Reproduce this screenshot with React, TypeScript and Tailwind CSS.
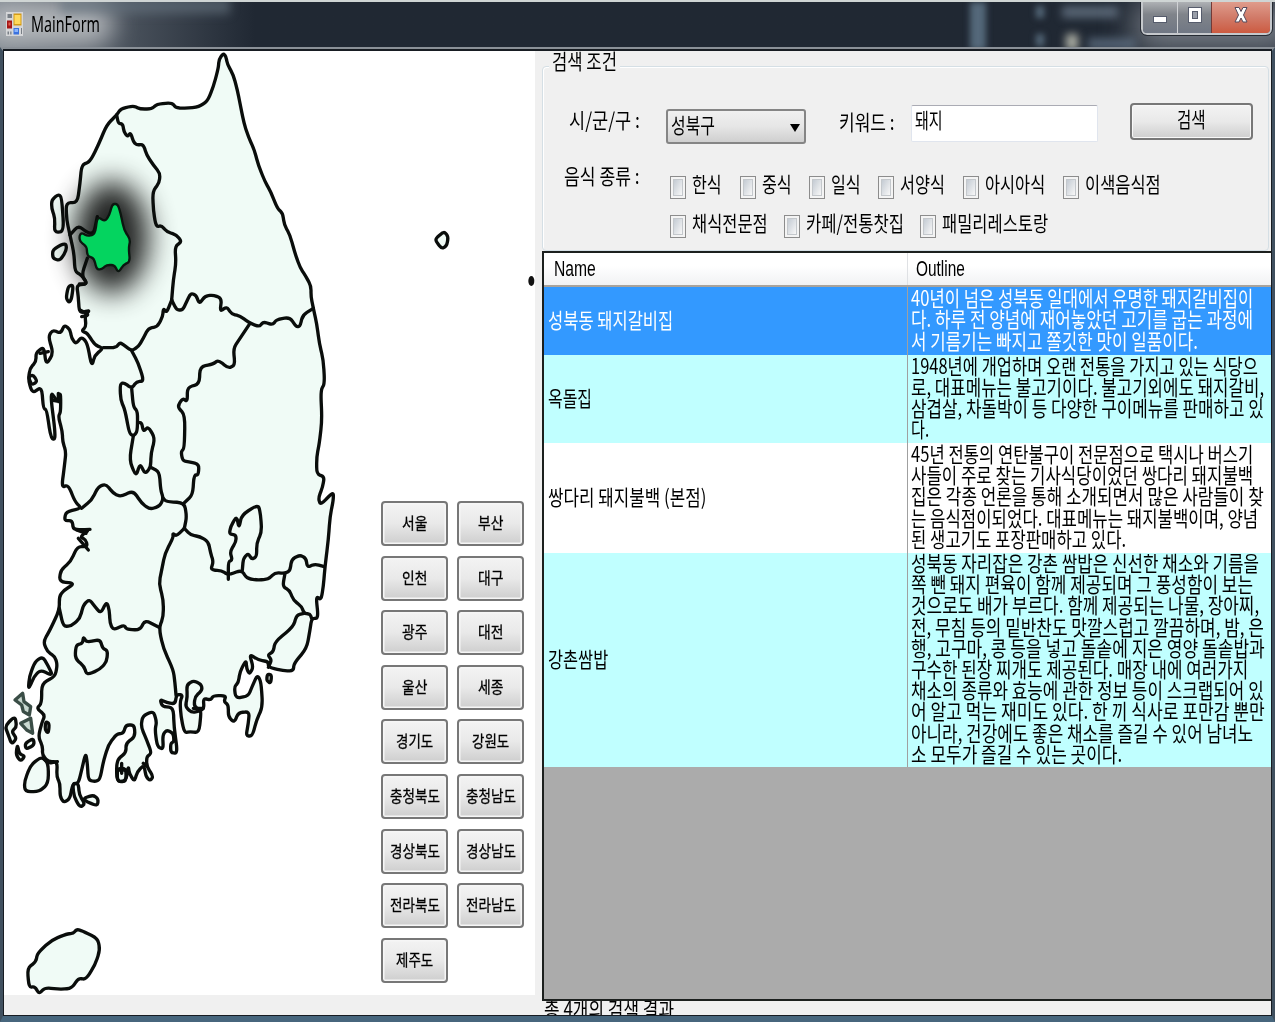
import { useLayoutEffect, useRef, useState } from 'react';

type FitProps = { text: string; w: number; size?: string; className?: string };

// One line of text condensed or widened horizontally to an exact width.
function Fit({ text, w, size = 'text-[21px] leading-[21.2px]', className = '' }: FitProps) {
  const ref = useRef<HTMLSpanElement>(null);
  const [scale, setScale] = useState(1);
  useLayoutEffect(() => {
    if (ref.current) setScale(w / ref.current.offsetWidth);
  }, [text, w]);
  return (
    <span className={`block shrink-0 whitespace-nowrap ${size} ${className}`} style={{ width: w }}>
      <span ref={ref} className="inline-block origin-left" style={{ transform: `scaleX(${scale})` }}>
        {text}
      </span>
    </span>
  );
}

// Rounds the corners of a path made of M/L/Z commands.
function soften(d: string) {
  return d
    .split('M')
    .filter(Boolean)
    .map((part) => {
      const closed = part.endsWith('Z');
      const p = part
        .replace('Z', '')
        .split('L')
        .map((s) => s.trim().split(/\s+/).map(Number));
      if (p.length < 3 || p.some((q) => q.length !== 2)) return 'M' + part;
      const mix = (a: number[], b: number[], t: number) => `${a[0] + (b[0] - a[0]) * t} ${a[1] + (b[1] - a[1]) * t}`;
      const n = p.length;
      let out = closed ? `M${mix(p[0], p[1], 0.4)}` : `M${p[0].join(' ')}`;
      const end = closed ? n : n - 2;
      for (let i = 1; i <= end; i++) {
        const a = p[(i - 1) % n];
        const b = p[i % n];
        const c = p[(i + 1) % n];
        out += `L${mix(b, a, 0.4)}Q${b.join(' ')} ${mix(b, c, 0.4)}`;
      }
      return out + (closed ? 'Z' : `L${p[n - 1].join(' ')}`);
    })
    .join('');
}

const regionRows = [
  ['서울', '부산'],
  ['인천', '대구'],
  ['광주', '대전'],
  ['울산', '세종'],
  ['경기도', '강원도'],
  ['충청북도', '충청남도'],
  ['경상북도', '경상남도'],
  ['전라북도', '전라남도'],
  ['제주도'],
];

function RegionButton({ label }: { label: string }) {
  const w = label.length === 2 ? 25 : label.length === 3 ? 37 : 50;
  return (
    <button className="flex h-[45px] w-[67px] items-center justify-center rounded-[4px] border-2 border-[#777] bg-linear-to-b from-[#f3f3f3] from-0% via-[#e9e9e9] via-50% to-[#cecece] shadow-[inset_0_0_0_1.5px_#f6f6f6]">
      <Fit text={label} w={w} size="text-[16px] leading-5" className="-mt-[3px] [-webkit-text-stroke:0.3px_black]" />
    </button>
  );
}

const mainland =
  'M670 160L678 170L682 192L700 225L712 270L722 320L732 370L745 410L763 450L775 495L795 545L812 575L832 625L848 640L853 675L870 705L885 760L900 802L918 830L933 858L933 890L940 925L950 970L958 1030L970 1080L974 1150L962 1172L966 1260L958 1330L950 1370L950 1422L973 1430L968 1460L955 1495L962 1515L1000 1475L1000 1500L990 1550L985 1620L975 1700L970 1760L963 1800L948 1788L955 1855L935 1855L930 1890L920 1945L882 1990L880 2013L850 2012L805 2002L805 1985L775 1980L748 1962L760 2002L748 2023L740 2005L738 1980L720 2015L715 2048L703 2060L707 2095L745 2088L757 2058L772 2025L783 2045L788 2120L770 2160L757 2208L738 2208L745 2170L748 2135L715 2138L703 2168L685 2150L685 2115L672 2105L678 2087L640 2087L632 2100L610 2095L612 2125L600 2132L603 2140L597 2198L570 2195L553 2198L543 2150L540 2105L548 2085L530 2083L525 2112L500 2108L480 2098L487 2120L520 2122L522 2180L533 2260L512 2258L512 2230L522 2225L520 2200L500 2190L488 2205L490 2248L472 2240L465 2190L470 2165L460 2133L428 2148L423 2180L440 2220L455 2260L440 2270L440 2298L460 2330L450 2342L438 2330L432 2295L412 2315L403 2345L388 2320L385 2298L378 2343L350 2345L350 2280L378 2258L378 2230L405 2210L403 2175L378 2175L370 2200L350 2202L325 2235L310 2285L300 2338L285 2345L265 2340L262 2290L257 2258L245 2310L235 2350L218 2352L210 2395L192 2408L180 2390L180 2350L170 2330L172 2285L145 2285L127 2265L128 2240L115 2210L125 2170L135 2145L110 2125L125 2110L125 2050L165 2030L172 1995L165 1970L142 1955L130 1925L150 1890L178 1830L178 1790L190 1772L225 1750L178 1745L182 1710L212 1685L232 1640L262 1640L258 1620L240 1610L270 1588L220 1590L217 1562L193 1562L198 1535L245 1525L225 1505L205 1455L185 1462L193 1400L198 1355L188 1325L187 1295L175 1250L182 1235L182 1175L172 1205L150 1172L168 1317L153 1317L140 1230L130 1225L125 1160L97 1180L85 1140L90 1105L108 1085L108 1058L132 1040L138 1095L160 1060L145 1010L158 990L182 1000L193 975L210 988L215 1015L228 1032L245 1010L262 1030L275 1100L285 1065L310 1045L285 1035L262 1000L245 993L258 980L255 945L270 930L238 940L235 890L230 855L262 852L245 825L225 815L222 760L210 705L200 660L198 608L232 608L240 550L245 495L270 485L295 435L320 375L350 345L362 327L400 317L420 327L455 327L470 313L515 308L530 325L590 323L622 305L640 260L655 205L657 178Z';

const borders = [
  'M350 345L355 370L368 372L372 395L382 410L392 398L400 425L410 435L430 433L440 465L460 495L480 520L478 548L458 575L460 630L468 680L485 677L500 695L530 705L545 725L525 740L528 790L520 840L515 900',
  'M515 900L530 930L548 930L560 905L572 880L588 885L598 912L615 888L640 885L665 895L660 935L680 920L695 942L720 948L750 970L778 980L790 965L818 975L830 958L870 952L888 980L900 980L908 945L940 925',
  'M515 900L500 938L490 925L488 950L472 980L445 985L430 1015L415 1040L395 1052L378 1040L360 1027L348 1043L310 1043',
  'M395 1052L415 1090L432 1143L410 1145L395 1165L372 1148L360 1152L362 1200L375 1230L388 1300L400 1308L412 1295L413 1235L400 1220L395 1165',
  'M400 1308L388 1380L408 1430L420 1390L435 1422L452 1402L453 1360L465 1315L445 1280L430 1295L425 1268L413 1268',
  'M452 1402L478 1415L482 1470L490 1495L480 1518L450 1528L425 1510L400 1472L362 1490L340 1480L318 1452L295 1460L275 1500L245 1525',
  'M490 1495L498 1505L553 1508L560 1550L553 1585',
  'M750 970L720 1015L700 1045L705 1095L685 1105L655 1080L640 1092L600 1100L598 1152L562 1162L562 1205L548 1195L532 1220L555 1245L553 1345L543 1355L548 1382L565 1385L597 1392L595 1425L582 1425L578 1485L553 1508',
  'M553 1585L572 1605L600 1610L625 1625L632 1660L640 1685L632 1710L665 1712L685 1725L725 1710L740 1735L770 1740L805 1738L825 1718L855 1720L870 1712L875 1678L900 1665L918 1675L922 1702L945 1692L973 1700',
  'M685 1738L685 1685L697 1680L690 1655L708 1625L708 1605L688 1602L692 1580L710 1548L717 1585L725 1545L775 1513L782 1545L785 1595L770 1630L770 1670L755 1678L745 1660L730 1675L727 1710',
  'M855 1720L848 1760L868 1770L880 1800L905 1820L912 1840L930 1842L935 1855',
  'M912 1840L890 1845L880 1880L825 1925L820 1955L803 1965L815 1980L805 2002',
  'M553 1585L530 1608L518 1600L520 1612L495 1660L485 1710L477 1750L490 1800L490 1850L477 1885L490 1945L520 2010L525 2050L528 2085',
  'M178 1825L190 1880L215 1877L240 1855L250 1815L268 1798L285 1820L302 1840L320 1805L328 1830L330 1870L340 1890L372 1875L380 1888L420 1890L435 1860L477 1882',
  'M250 1910L260 1927L300 1918L308 1945L323 1952L320 1985L300 2008L260 2025L253 2000L225 1975L228 1935L248 1930Z',
  'M230 1590L258 1600M235 1615L265 1650M240 1590L270 1588',
  'M210 705L235 677L265 700L282 698L292 650M262 775L245 825L262 852L238 852',
  'M85 1130L100 1125L112 1145L95 1155ZM155 1200L180 1205M175 1180L175 1205M120 1060L145 1055M240 930L268 945L245 950',
  'M350 2310L378 2310M365 2290L365 2320M440 2298L430 2290M580 2125L610 2125M130 2275L145 2290L172 2285',
];

const islands = [
  'M155 600L175 583L185 592L192 695L163 697L165 655L155 625Z',
  'M158 748L197 728L200 750L180 782L158 775Z',
  'M205 858L220 855L215 895L208 908L198 895Z',
  'M1308 715L1332 694L1345 710L1340 738L1325 746L1308 724Z',
  'M560 2055L580 2042L603 2052L607 2070L585 2090L582 2120L605 2132L575 2138L556 2120L562 2090Z',
  'M802 2022L815 2025L812 2050L800 2042Z',
  'M85 2070L88 2030L105 1985L128 1970L145 1998L158 2027L122 2010L103 2028Z',
  'M45 2148L50 2180L35 2195L50 2215L35 2233L25 2205L15 2178Z',
  'M75 2230L100 2215L103 2235L78 2248Z',
  'M52 2233L58 2262L75 2268L62 2284L48 2265Z',
  'M137 2165L148 2170L145 2200L135 2190Z',
  'M125 2270L145 2290L145 2350L118 2375L75 2375L73 2345L92 2295Z',
  'M218 2350L235 2350L238 2385L255 2412L240 2422L222 2390Z',
  'M250 2395L280 2385L295 2398L292 2418L260 2405Z',
  'M352 2305L378 2305L378 2345L352 2345Z',
  'M82 2905L108 2885L112 2860L155 2820L200 2802L220 2800L230 2788L245 2792L293 2815L300 2850L285 2895L258 2938L235 2935L215 2965L180 2968L135 2963L117 2982L105 2960L87 2962Z',
];

function KoreaMap() {
  return (
    <svg className="block h-[944px] w-[531px]" viewBox="12 153 1593 2832" preserveAspectRatio="none">
      <defs>
        <filter id="glow" x="-100%" y="-100%" width="300%" height="300%">
          <feGaussianBlur stdDeviation="42" />
        </filter>
      </defs>
      <g strokeLinejoin="round" strokeLinecap="round">
        <path d={soften(mainland)} fill="#f0fbf6" />
        <g fill="#f0fbf6" stroke="#0a0d0b" strokeWidth="10">
          {islands.map((d) => (
            <path key={d} d={soften(d)} />
          ))}
        </g>
        <ellipse cx="335" cy="712" rx="112" ry="168" fill="#000" opacity="0.85" filter="url(#glow)" />
        <g fill="none" stroke="#0a0d0b" strokeWidth="10">
          <path d={soften(mainland)} />
          {borders.map((d) => (
            <path key={d} d={soften(d)} />
          ))}
        </g>
        <path
          d={soften(
            'M238 708L245 698L262 708L285 703L292 650L315 664L328 645L337 612L353 612L362 640L372 690L391 718L386 745L390 785L370 795L355 818L343 795L320 795L305 808L290 808L282 775L262 768L260 740L240 725Z',
          )}
          fill="#04d45f"
          stroke="#0c1610"
          strokeWidth="7"
        />
        <path
          d="M45 2100L68 2080L72 2105L92 2120L88 2145L70 2135L65 2115ZM62 2170L92 2155L98 2200L80 2190Z"
          fill="#c9d8d0"
          stroke="#3a4d46"
          strokeWidth="10"
        />
        <ellipse cx="1594" cy="843" rx="9" ry="15" fill="#111" />
      </g>
    </svg>
  );
}

function Check({ text, w, className = '' }: FitProps) {
  return (
    <label className={`flex items-start gap-[6px] ${className}`}>
      <span className="mt-[3px] h-[23px] w-4 border-[1.5px] border-[#8c8c8c] bg-[#f4f4f4] p-[2px]">
        <span className="block h-full w-full border border-[#c4c8cc] bg-linear-to-br from-[#c4cbd3] to-[#f8f8f8]" />
      </span>
      <Fit text={text} w={w} />
    </label>
  );
}

type Row = { name: string; nameW: number; height: string; tone: string; lines: [string, number][] };

const rows: Row[] = [
  {
    name: '성북동 돼지갈비집',
    nameW: 125,
    height: 'h-[68px]',
    tone: 'bg-[#3399ff] text-white',
    lines: [
      ['40년이 넘은 성북동 일대에서 유명한 돼지갈비집이', 342],
      ['다. 하루 전 양념에 재어놓았던 고기를 굽는 과정에', 342],
      ['서 기름기는 빠지고 쫄깃한 맛이 일품이다.', 287],
    ],
  },
  {
    name: '옥돌집',
    nameW: 44,
    height: 'h-[88px]',
    tone: 'bg-[#c0ffff]',
    lines: [
      ['1948년에 개업하며 오랜 전통을 가지고 있는 식당으', 347],
      ['로, 대표메뉴는 불고기이다. 불고기외에도 돼지갈비,', 353],
      ['삼겹살, 차돌박이 등 다양한 구이메뉴를 판매하고 있', 353],
      ['다.', 18],
    ],
  },
  {
    name: '쌍다리 돼지불백 (본점)',
    nameW: 158,
    height: 'h-[110px]',
    tone: 'bg-white',
    lines: [
      ['45년 전통의 연탄불구이 전문점으로 택시나 버스기', 342],
      ['사들이 주로 찾는 기사식당이었던 쌍다리 돼지불백', 342],
      ['집은 각종 언론을 통해 소개되면서 많은 사람들이 찾', 353],
      ['는 음식점이되었다. 대표메뉴는 돼지불백이며, 양념', 347],
      ['된 생고기도 포장판매하고 있다.', 215],
    ],
  },
  {
    name: '강촌쌈밥',
    nameW: 60,
    height: 'h-[214px]',
    tone: 'bg-[#c0ffff]',
    lines: [
      ['성북동 자리잡은 강촌 쌈밥은 신선한 채소와 기름을', 348],
      ['쪽 뺀 돼지 편육이 함께 제공되며 그 풍성함이 보는', 342],
      ['것으로도 배가 부르다. 함께 제공되는 나물, 장아찌,', 348],
      ['전, 무침 등의 밑반찬도 맛깔스럽고 깔끔하며, 밤, 은', 353],
      ['행, 고구마, 콩 등을 넣고 돌솥에 지은 영양 돌솥밥과', 354],
      ['구수한 된장 찌개도 제공된다. 매장 내에 여러가지', 337],
      ['채소의 종류와 효능에 관한 정보 등이 스크랩되어 있', 353],
      ['어 알고 먹는 재미도 있다. 한 끼 식사로 포만감 뿐만', 354],
      ['아니라, 건강에도 좋은 채소를 즐길 수 있어 남녀노', 342],
      ['소 모두가 즐길 수 있는 곳이다.', 211],
    ],
  },
];

function TitleBar() {
  return (
    <header className="relative flex h-[47px] justify-between overflow-hidden border-t-2 border-[#cfd5d4] bg-linear-to-r from-[#777f88] from-0% via-[#202833] via-20% to-[#202833]">
      <div className="absolute -left-4 top-0 h-11 w-[130px] rounded-full bg-[#c5c8cb]/80 blur-[12px]" />
      <div className="absolute left-[60px] -top-1 h-4 w-[170px] bg-[#66737f]/60 blur-[5px]" />
      <div className="absolute left-[970px] top-0 h-12 w-4 bg-[#54687a] blur-[3px]" />
      <div className="absolute -right-5 top-0 h-12 w-[160px] bg-[#777d86] blur-[16px]" />
      <div className="absolute left-[1036px] top-1 h-3 w-2 bg-[#55687a] blur-[3px]" />
      <div className="absolute left-[1062px] top-1 h-3 w-14 bg-[#6d7e8f]/70 blur-[4px]" />
      <div className="absolute left-[1036px] top-8 h-3 w-2 bg-[#55687a] blur-[3px]" />
      <div className="absolute left-[1066px] top-8 h-4 w-3 bg-[#b0b2a7] blur-[4px]" />
      <div className="absolute left-[1088px] top-9 h-3 w-12 bg-[#5c6d80]/80 blur-[4px]" />
      <div className="relative flex items-start pl-[6px] pt-[10px]">
        <svg className="h-6 w-[17px]" viewBox="0 0 17 24" preserveAspectRatio="none">
          <path fill="#d5d6d8" d="M0 0h17v24H0z" />
          <path fill="#787e85" d="M1.5 2h4.5v4H1.5zM1.5 19.500h1.500v3H1.500zM4.200 19.500h1.300v3H4.200zM15 16h1v6h-1z" />
          <path fill="#d49b16" d="M7.500 1.500h8v12h-8z" />
          <path fill="#ffd95b" d="M8.500 3h6v9h-6z" />
          <path fill="#a61616" d="M1 8.500h5v8H1z" />
          <path fill="#e2604e" d="M2.500 10.500h2v3h-2z" />
          <path fill="#3b72df" d="M7.500 16h5.500v6.500H7.500z" />
          <path fill="#8bb4fb" d="M8.500 17h3.500v3H8.500z" />
        </svg>
        <Fit text="MainForm" w={69} size="text-[22px] leading-6" className="-mt-[1px] ml-[8px] font-['Noto_Sans']" />
      </div>
      <div className="relative mr-[3px] flex h-[33px] overflow-hidden rounded-b-[6px] border-2 border-t-0 border-[#c5c8cc] outline outline-[#262b33]">
        <div className="flex w-[35px] justify-center border-r border-[#d0d2d5] bg-linear-to-b from-[#aeb1b4] from-0% via-[#80848a] via-40% to-[#707784]">
          <span className="mt-[14px] h-[7px] w-[14px] border border-[#565c6c] bg-white" />
        </div>
        <div className="flex w-[34px] justify-center border-r border-[#743a36] bg-linear-to-b from-[#aeb1b4] from-0% via-[#80848a] via-40% to-[#707784]">
          <span className="mt-[5px] h-4 w-[14px] border border-[#565c6c] bg-white p-[3px]">
            <span className="block h-full border border-[#565c6c] bg-[#999ea8]" />
          </span>
        </div>
        <div className="flex w-[58px] justify-center bg-linear-to-b from-[#df9c8c] from-0% via-[#d17a68] via-40% via-[#c0391c] via-50% to-[#cc5a40]">
          <svg className="mt-[4px] h-[18px] w-[16px]" viewBox="0 0 16 18">
            <path d="M2 1.500h4l2 4 2-4h4L10.500 9l3.500 7h-4L8 12l-2 4H2l3.500-7z" fill="#fff" stroke="#554a5c" strokeWidth="1" />
          </svg>
        </div>
      </div>
    </header>
  );
}

export default function App() {
  return (
    <div className="flex h-[1022px] w-[1275px] flex-col overflow-hidden bg-[#435463] font-['Noto_Sans_CJK_KR',sans-serif] text-black">
      <TitleBar />
      <div className="flex h-[975px] border-x-[3px] border-b-[6px] border-t-[4px] border-b-[#47667d] border-l-[#40505f] border-r-[#40505f] border-t-[#8a9097] bg-[#8a9097]">
        <main className="-mt-[2px] flex flex-1 overflow-hidden border border-t-2 border-[#171c22] bg-[#f0f0f0]">
          <section className="relative h-[944px] w-[531px] shrink-0 bg-white">
            <KoreaMap />
            <div className="absolute left-[377px] top-[450px] flex flex-col gap-[9.6px]">
              {regionRows.map((row) => (
                <div key={row[0]} className="flex gap-[9px]">
                  {row.map((label) => (
                    <RegionButton key={label} label={label} />
                  ))}
                </div>
              ))}
            </div>
          </section>

          <section className="ml-[7px] flex flex-1 flex-col">
            <fieldset className="relative mr-[2px] mt-[15px] h-[185px] shrink-0 rounded-[4px] border border-[#d5dfe5] shadow-[inset_1px_1px_0_#fff]">
              <div className="absolute -top-[17px] left-[6px] bg-[#f0f0f0] px-[3px]">
                <Fit text="검색 조건" w={65} />
              </div>
              <div className="flex items-start pl-[26px] pt-[36px]">
                <Fit text="시/군/구 :" w={71} className="mt-[6px]" />
                <div className="ml-[26px] mt-[6px] flex h-[35px] w-[140px] items-start justify-between rounded-[3px] border-2 border-[#858585] bg-linear-to-b from-[#f0f0f0] from-0% via-[#e6e6e6] via-50% to-[#cfcfcf] pl-[3px] pr-1 pt-[3px]">
                  <Fit text="성북구" w={44} />
                  <svg className="mt-[10px] h-2 w-[10px]" viewBox="0 0 10 8">
                    <path d="M0 0h10L5 8z" />
                  </svg>
                </div>
                <Fit text="키워드 :" w={56} className="ml-[33px] mt-[8px]" />
                <div className="ml-[16px] mt-[2px] h-[37px] w-[187px] rounded-[2px] border border-[#e0e5ee] border-t-[#aaabb4] bg-white pl-[3px] pt-[3px]">
                  <Fit text="돼지" w={28} />
                </div>
                <button className="ml-[32px] flex h-[37px] w-[123px] items-start justify-center rounded-[4px] border-2 border-[#777] bg-linear-to-b from-[#f3f3f3] from-0% via-[#e9e9e9] via-50% to-[#cecece] pt-[3px] shadow-[inset_0_0_0_1px_#f8f8f8]">
                  <Fit text="검색" w={29} />
                </button>
              </div>
              <div className="flex items-start pl-[21px] pt-[21px]">
                <Fit text="음식 종류 :" w={76} />
                <div className="ml-[30px] mt-[8px] flex flex-col gap-[13px]">
                  <div className="flex">
                    <Check text="한식" w={30} />
                    <Check text="중식" w={30} className="ml-[18px]" />
                    <Check text="일식" w={30} className="ml-[17px]" />
                    <Check text="서양식" w={45} className="ml-[17px]" />
                    <Check text="아시아식" w={60} className="ml-[18px]" />
                    <Check text="이색음식점" w={76} className="ml-[18px]" />
                  </div>
                  <div className="flex">
                    <Check text="채식전문점" w={76} />
                    <Check text="카페/전통찻집" w={98} className="ml-[16px]" />
                    <Check text="패밀리레스토랑" w={106} className="ml-[16px]" />
                  </div>
                </div>
              </div>
            </fieldset>

            <div className="flex h-[750px] shrink-0 flex-col border-2 border-r-0 border-[#1c201e] bg-[#ababab]">
              <div className="flex h-[34px] shrink-0 items-center border-b-2 border-[#a9a39c] bg-linear-to-b from-white from-40% to-[#f1f2f4]">
                <div className="flex h-full w-[364px] items-center border-r border-[#dfe1e4] pl-[10px]">
                  <Fit text="Name" w={42} size="text-[22px] leading-6" className="font-['Liberation_Sans']" />
                </div>
                <Fit text="Outline" w={49} size="text-[22px] leading-6" className="ml-[8px] font-['Liberation_Sans']" />
              </div>
              {rows.map((row) => (
                <div key={row.name} className={`flex shrink-0 ${row.height} ${row.tone}`}>
                  <div className="flex w-[364px] items-center border-r border-[#a0a0a0] pb-[3px] pl-[4px]">
                    <Fit text={row.name} w={row.nameW} />
                  </div>
                  <div className="flex flex-col justify-center pb-[4px] pl-[3px]">
                    {row.lines.map(([text, w]) => (
                      <Fit key={text} text={text} w={w} />
                    ))}
                  </div>
                </div>
              ))}
            </div>
            <div className="h-[15px] overflow-hidden pl-[2px]">
              <Fit text="총 4개의 검색 결과" w={130} className="-mt-[3px]" />
            </div>
          </section>
        </main>
      </div>
    </div>
  );
}
